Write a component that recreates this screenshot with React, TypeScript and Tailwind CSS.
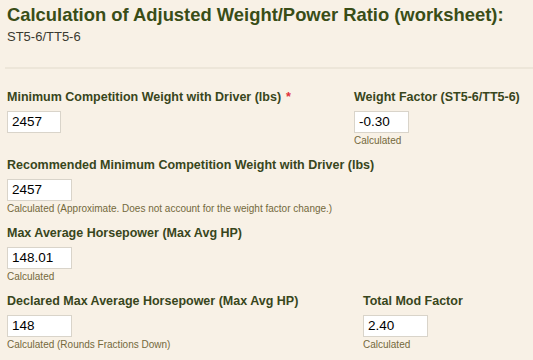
import React from 'react';

/* ── Worksheet field ── */

interface FieldProps {
  label: string;
  value: string;
  width: string;
  required?: boolean;
  help?: string;
}

function Field({ label, value, width, required, help }: FieldProps) {
  return (
    <div>
      <div className="text-[12.5px] leading-[16px] font-bold text-[#38461c] whitespace-nowrap">
        {label}
        {required && <span className="text-[#e0303a] ml-[5px]">*</span>}
      </div>
      <div
        className={`mt-[6px] h-[22px] ${width} bg-white border border-[#d9d4ca] px-[4px] text-[13.5px] leading-[20px] text-black`}
      >
        {value}
      </div>
      {help && (
        <div className="mt-[1px] text-[10px] leading-[14px] text-[#74693c] whitespace-nowrap">
          {help}
        </div>
      )}
    </div>
  );
}

export default function App() {
  return (
    <main
      className="w-[533px] h-[360px] overflow-hidden bg-[#f8f1e6] pt-[2px]"
      style={{ fontFamily: '"Liberation Sans", Arial, sans-serif' }}
    >
      {/* ── Header ── */}
      <div className="px-[7px]">
        <h1 className="text-[18.4px] leading-[26px] font-bold text-[#394d17] whitespace-nowrap">
          Calculation of Adjusted Weight/Power Ratio (worksheet):
        </h1>
        <div className="text-[13px] leading-[18px] text-[#3a3a30]">ST5-6/TT5-6</div>
      </div>

      <div className="ml-[5px] mt-[21px] h-[2px] bg-[#ede6d9]" />

      {/* ── Fields ── */}
      <div className="px-[7px] mt-[20px] flex flex-col gap-[9px]">
        <div className="flex">
          <div className="w-[347px]">
            <Field
              label="Minimum Competition Weight with Driver (lbs)"
              value="2457"
              width="w-[54px]"
              required
            />
          </div>
          <Field
            label="Weight Factor (ST5-6/TT5-6)"
            value="-0.30"
            width="w-[55px]"
            help="Calculated"
          />
        </div>

        <Field
          label="Recommended Minimum Competition Weight with Driver (lbs)"
          value="2457"
          width="w-[65px]"
          help="Calculated (Approximate. Does not account for the weight factor change.)"
        />

        <Field
          label="Max Average Horsepower (Max Avg HP)"
          value="148.01"
          width="w-[65px]"
          help="Calculated"
        />

        <div className="flex">
          <div className="w-[356px]">
            <Field
              label="Declared Max Average Horsepower (Max Avg HP)"
              value="148"
              width="w-[65px]"
              help="Calculated (Rounds Fractions Down)"
            />
          </div>
          <Field label="Total Mod Factor" value="2.40" width="w-[65px]" help="Calculated" />
        </div>
      </div>
    </main>
  );
}
